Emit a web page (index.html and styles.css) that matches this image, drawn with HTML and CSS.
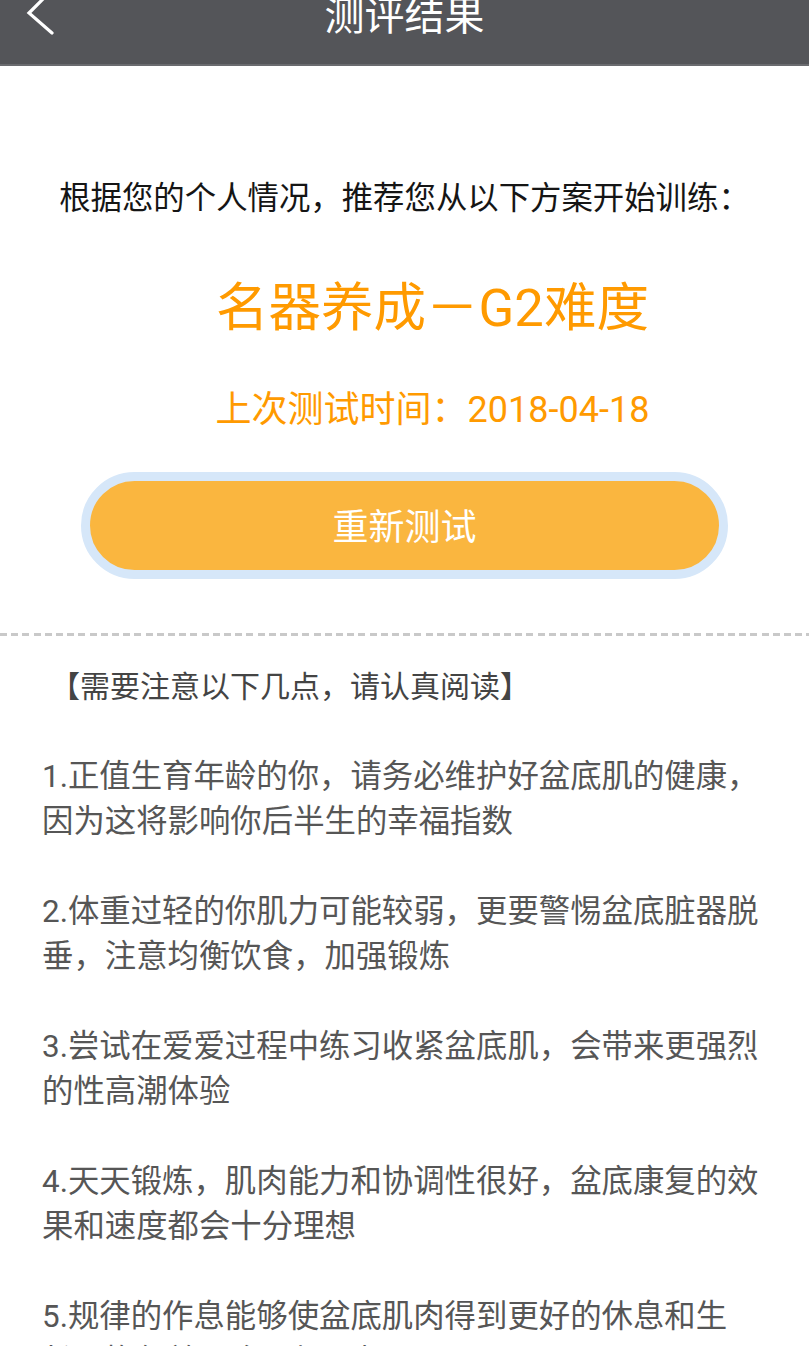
FILE: index.html
```html
<!DOCTYPE html>
<html lang="zh-CN">
<head>
<meta charset="utf-8">
<title>测评结果</title>
<link rel="stylesheet" href="styles.css">
</head>
<body>
<header class="topbar">
  <div class="back">
    <svg width="40" height="40" viewBox="0 0 40 40" class="back-icon">
      <polyline points="32,-10 9,13 32,33" fill="none" stroke="#ffffff" stroke-width="3.2" stroke-linecap="round" stroke-linejoin="miter"/>
    </svg>
  </div>
  <h1 class="title">测评结果</h1>
  <div class="spacer"></div>
</header>

<main class="result">
  <p class="intro">根据您的个人情况，推荐您从以下方案开始训练：</p>
  <div class="plan">
    <p class="plan-name">名器养成－G2难度</p>
    <p class="plan-date">上次测试时间：2018-04-18</p>
  </div>
  <div class="retest-wrap">
    <button class="retest">重新测试</button>
  </div>
</main>

<div class="divider"></div>

<section class="notes">
  <h2 class="notes-title">【需要注意以下几点，请认真阅读】</h2>
  <ol class="note-list">
    <li>1.正值生育年龄的你，请务必维护好盆底肌的健康，因为这将影响你后半生的幸福指数</li>
    <li>2.体重过轻的你肌力可能较弱，更要警惕盆底脏器脱垂，注意均衡饮食，加强锻炼</li>
    <li>3.尝试在爱爱过程中练习收紧盆底肌，会带来更强烈的性高潮体验</li>
    <li>4.天天锻炼，肌肉能力和协调性很好，盆底康复的效果和速度都会十分理想</li>
    <li>5.规律的作息能够使盆底肌肉得到更好的休息和生长，恢复效果会更加理想</li>
  </ol>
</section>
</body>
</html>
```

FILE: styles.css
```css
html, body {
  margin: 0;
  padding: 0;
  background: #ffffff;
}

body {
  font-family: Roboto, "Noto Sans CJK SC", sans-serif;
  overflow: hidden;
}

p, h1, h2, ol {
  margin: 0;
  padding: 0;
}

.topbar {
  height: 64px;
  background: #545559;
  border-bottom: 2px solid #6a6b6f;
  display: grid;
  grid-template-columns: 120px 1fr 120px;
  align-items: start;
  overflow: hidden;
}

.back {
  padding-left: 20px;
  height: 40px;
}

.back-icon {
  display: block;
}

.title {
  font-size: 40px;
  font-weight: 400;
  color: #ffffff;
  text-align: center;
  line-height: 40px;
  margin-top: -3px;
}

.result {
  padding-top: 111px;
}

.intro {
  font-size: 31.4px;
  line-height: 44px;
  color: #151515;
  text-align: center;
}

.plan {
  padding-left: 56px;
  text-align: center;
  color: #ff9a00;
}

.plan-name {
  margin-top: 57px;
  font-size: 52.5px;
  line-height: 60px;
}

.plan-date {
  margin-top: 50px;
  font-size: 36px;
  line-height: 44px;
}

.retest-wrap {
  padding: 40px 81px 0;
}

.retest {
  display: block;
  width: 100%;
  height: 107px;
  box-sizing: border-box;
  border: 9px solid #d6e7f9;
  border-radius: 54px;
  background: #fab63f;
  color: #ffffff;
  font-family: Roboto, "Noto Sans CJK SC", sans-serif;
  font-size: 36px;
  padding: 0 0 4px;
}

.divider {
  margin-top: 54px;
  height: 3px;
  background: repeating-linear-gradient(to right, #c9c9c9 0 7px, transparent 7px 11.2px);
}

.notes {
  padding: 29px 37px 0 42px;
}

.notes-title {
  font-size: 30px;
  font-weight: 400;
  line-height: 44px;
  color: #444444;
  padding-left: 8px;
}

.note-list {
  list-style: none;
  margin-top: 45px;
  display: flex;
  flex-direction: column;
  gap: 45px;
}

.note-list li {
  font-size: 31.4px;
  line-height: 45px;
  color: #565656;
}
```
